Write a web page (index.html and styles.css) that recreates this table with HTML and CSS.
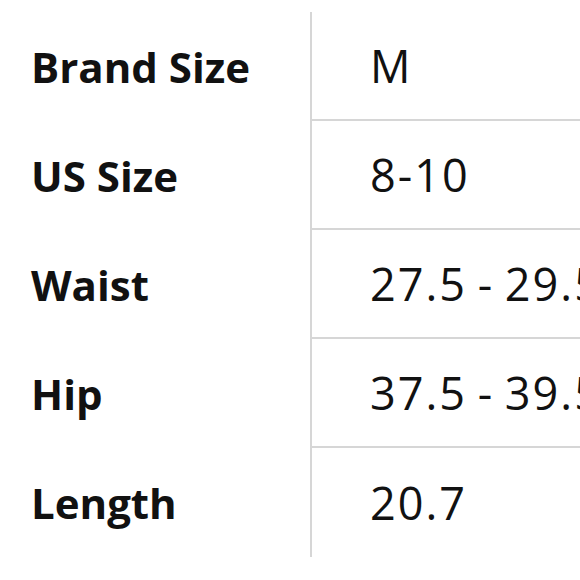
FILE: index.html
```html
<!DOCTYPE html>
<html>
<head>
<meta charset="utf-8">
<link rel="stylesheet" href="styles.css">
</head>
<body>
<div class="table">
  <div class="row"><div class="label">Brand Size</div><div class="value">M</div></div>
  <div class="row"><div class="label">US Size</div><div class="value">8-10</div></div>
  <div class="row"><div class="label">Waist</div><div class="value">27.5 - 29.5</div></div>
  <div class="row"><div class="label">Hip</div><div class="value">37.5 - 39.5</div></div>
  <div class="row"><div class="label">Length</div><div class="value">20.7</div></div>
</div>
</body>
</html>
```
FILE: styles.css
```css
html, body {
  margin: 0;
  padding: 0;
  background: #fff;
  overflow: hidden;
}
body {
  font-family: "Open Sans", "Noto Sans", sans-serif;
  color: #111;
}
.table {
  margin-top: 12px;
  display: flex;
  flex-direction: column;
  width: 580px;
}
.row {
  display: flex;
  height: 109px;
}
.label {
  flex: none;
  border-right: 2px solid #d6d6d6;
  box-sizing: border-box;
  width: 312px;
  padding-left: 31px;
  display: flex;
  align-items: center;
  font-weight: 700;
  font-size: 42px;
  white-space: nowrap;
}
.value {
  flex: 1;
  min-width: 0;
  border-bottom: 2px solid #d6d6d6;
  padding-left: 58px;
  display: flex;
  align-items: center;
  font-size: 45px;
  letter-spacing: 2px;
  word-spacing: -3px;
  white-space: nowrap;
  overflow: hidden;
}
.row:last-child .value {
  border-bottom: none;
}
```
